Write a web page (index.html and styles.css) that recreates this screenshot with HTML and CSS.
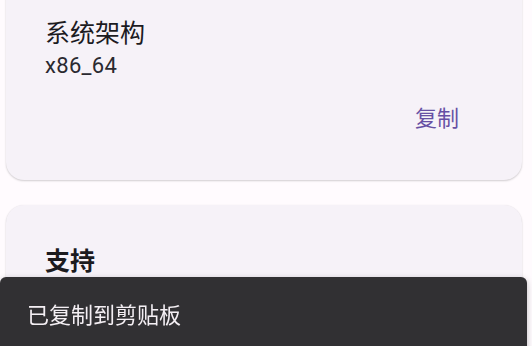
FILE: index.html
```html
<!DOCTYPE html>
<html lang="zh-CN">
<head>
<meta charset="utf-8">
<title>关于</title>
<link rel="stylesheet" href="styles.css">
</head>
<body>
<main class="list">
  <section class="card card-first">
    <div class="card-title">系统架构</div>
    <div class="card-value">x86_64</div>
    <div class="actions">
      <button class="text-button" type="button">复制</button>
    </div>
  </section>
  <section class="card">
    <div class="card-heading">支持</div>
  </section>
</main>
<div class="snackbar">
  <span class="snackbar-text">已复制到剪贴板</span>
</div>
</body>
</html>
```
FILE: styles.css
```css
html, body {
  margin: 0;
  padding: 0;
  background: #FFFBFE;
  height: 100%;
  overflow: hidden;
}
body {
  font-family: "Roboto", "Noto Sans CJK SC", sans-serif;
  color: #1C1B1F;
}
.list {
  display: flex;
  flex-direction: column;
  gap: 25px;
  padding: 0 10px 0 6px;
}
.card {
  background: #F6F2F8;
  border-radius: 18px;
  box-shadow: 0 1px 2px rgba(0, 0, 0, 0.18), 0 0 1px rgba(0, 0, 0, 0.06);
  padding: 0 39px;
}
.card-first {
  margin-top: -30px;
  padding-top: 48px;
  padding-bottom: 31px;
}
.card-title {
  font-size: 25px;
  line-height: 32px;
  font-weight: 400;
}
.card-value {
  font-size: 22px;
  line-height: 32px;
  letter-spacing: 0.3px;
  color: #2a2930;
}
.actions {
  display: flex;
  justify-content: flex-end;
  margin-top: 1px;
  margin-right: 5px;
}
.text-button {
  font-family: "Roboto", "Noto Sans CJK SC", sans-serif;
  font-size: 22px;
  line-height: 28px;
  color: #6750A4;
  background: transparent;
  border: 0;
  padding: 22px 19px 16px;
  border-radius: 32px;
}
.card-heading {
  font-size: 25px;
  line-height: 32px;
  font-weight: 700;
  padding-top: 41px;
  padding-bottom: 60px;
}
.snackbar {
  position: fixed;
  left: 0;
  right: 5px;
  top: 277px;
  height: 90px;
  background: #313033;
  border-radius: 6px;
  box-shadow: 0 2px 6px rgba(0, 0, 0, 0.25);
  padding: 24px 27px 0;
  box-sizing: border-box;
}
.snackbar-text {
  font-size: 22px;
  line-height: 30px;
  color: #F4EFF4;
}
```
